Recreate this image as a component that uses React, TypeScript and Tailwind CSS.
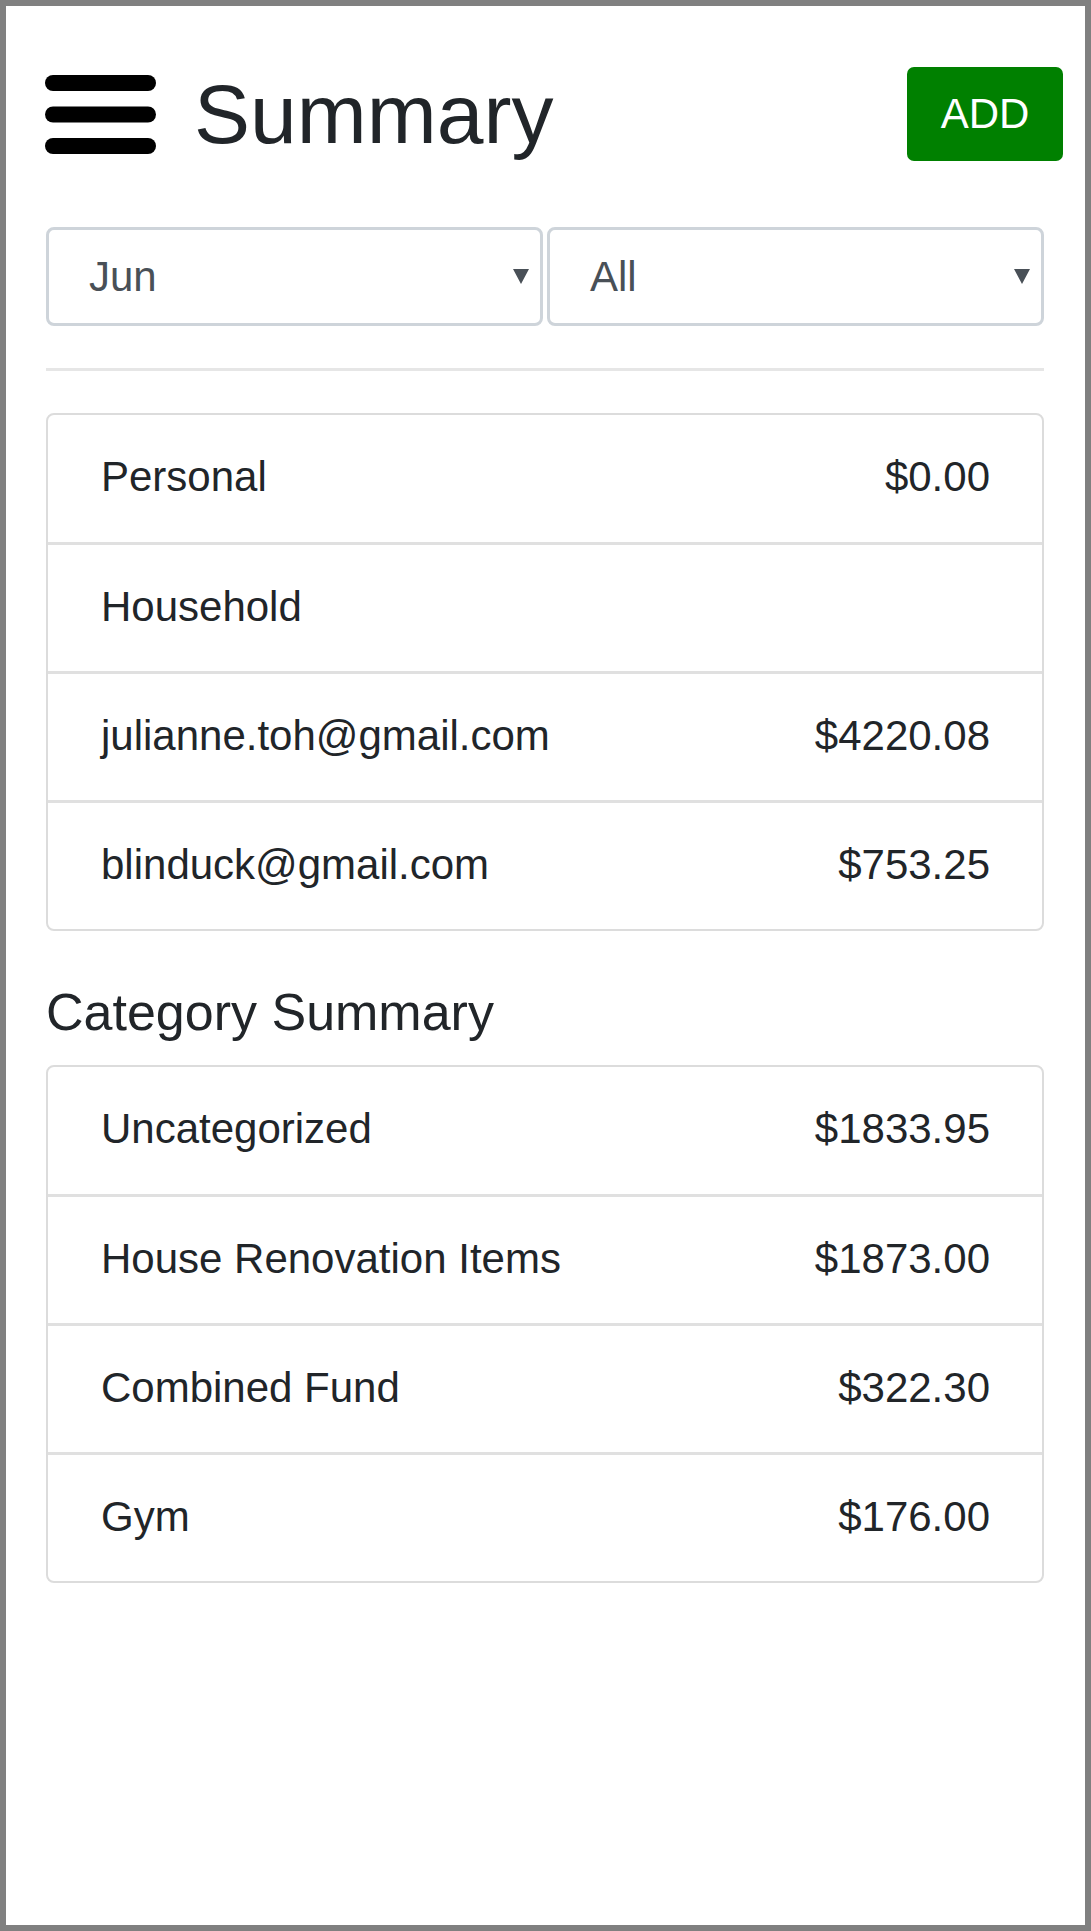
import React from 'react';

const Caret = () => (
    <svg width="16" height="15" viewBox="0 0 16 15" className="shrink-0">
        <polygon points="0,0 16,0 8,15" fill="#495057" />
    </svg>
);

const Hamburger = () => (
    <svg width="111" height="79" viewBox="0 0 111 79" className="shrink-0">
        <rect x="0" y="0" width="111" height="16" rx="8" fill="#000" />
        <rect x="0" y="31.5" width="111" height="16" rx="8" fill="#000" />
        <rect x="0" y="63" width="111" height="16" rx="8" fill="#000" />
    </svg>
);

const SelectBox = ({ value }: { value: string }) => (
    <div className="h-[99px] border-[3px] border-[#ced4da] rounded-[8px] flex items-center justify-between pl-[40px] pr-[11px] text-[42px] text-[#495057]">
        <span className="leading-none">{value}</span>
        <Caret />
    </div>
);

const ListCard = ({ rows }: { rows: { label: string; amount?: string }[] }) => (
    <div className="border-2 border-[#dcdcdc] rounded-[8px]">
        {rows.map((row, i) => (
            <div
                key={row.label}
                className={`flex items-center justify-between pl-[53px] pr-[52px] pb-[3px] text-[42px] ${i > 0 ? 'h-[129px] border-t-[3px] border-[#e0e0e0]' : 'h-[127px]'}`}
            >
                <span className="leading-none">{row.label}</span>
                {row.amount && <span className="leading-none">{row.amount}</span>}
            </div>
        ))}
    </div>
);

const App: React.FC = () => {
    return (
        <div className="h-[1931px] border-[6px] border-[#808080] bg-white text-[#212529] font-['Liberation_Sans',Arial,sans-serif]">
            {/* Header */}
            <div className="flex items-center justify-between pt-[61px] pl-[39px] pr-[22px]">
                <div className="flex items-center gap-[38px]">
                    <Hamburger />
                    <h1 className="text-[84px] leading-none">Summary</h1>
                </div>
                <button className="w-[156px] h-[94px] bg-[#008000] rounded-[7px] text-white text-[42px] leading-none">ADD</button>
            </div>

            <div className="pl-[40px] pr-[41px]">
                {/* Filters */}
                <div className="grid grid-cols-2 gap-[4px] mt-[66px]">
                    <SelectBox value="Jun" />
                    <SelectBox value="All" />
                </div>

                <hr className="mt-[42px] border-0 border-t-[3px] border-[#e6e6e6]" />

                <div className="mt-[42px]">
                    <ListCard
                        rows={[
                            { label: 'Personal', amount: '$0.00' },
                            { label: 'Household' },
                            { label: 'julianne.toh@gmail.com', amount: '$4220.08' },
                            { label: 'blinduck@gmail.com', amount: '$753.25' },
                        ]}
                    />
                </div>

                <h5 className="text-[52px] leading-[1.2] mt-[50px] mb-[22px]">Category Summary</h5>

                <ListCard
                    rows={[
                        { label: 'Uncategorized', amount: '$1833.95' },
                        { label: 'House Renovation Items', amount: '$1873.00' },
                        { label: 'Combined Fund', amount: '$322.30' },
                        { label: 'Gym', amount: '$176.00' },
                    ]}
                />
            </div>
        </div>
    );
};

export default App;
